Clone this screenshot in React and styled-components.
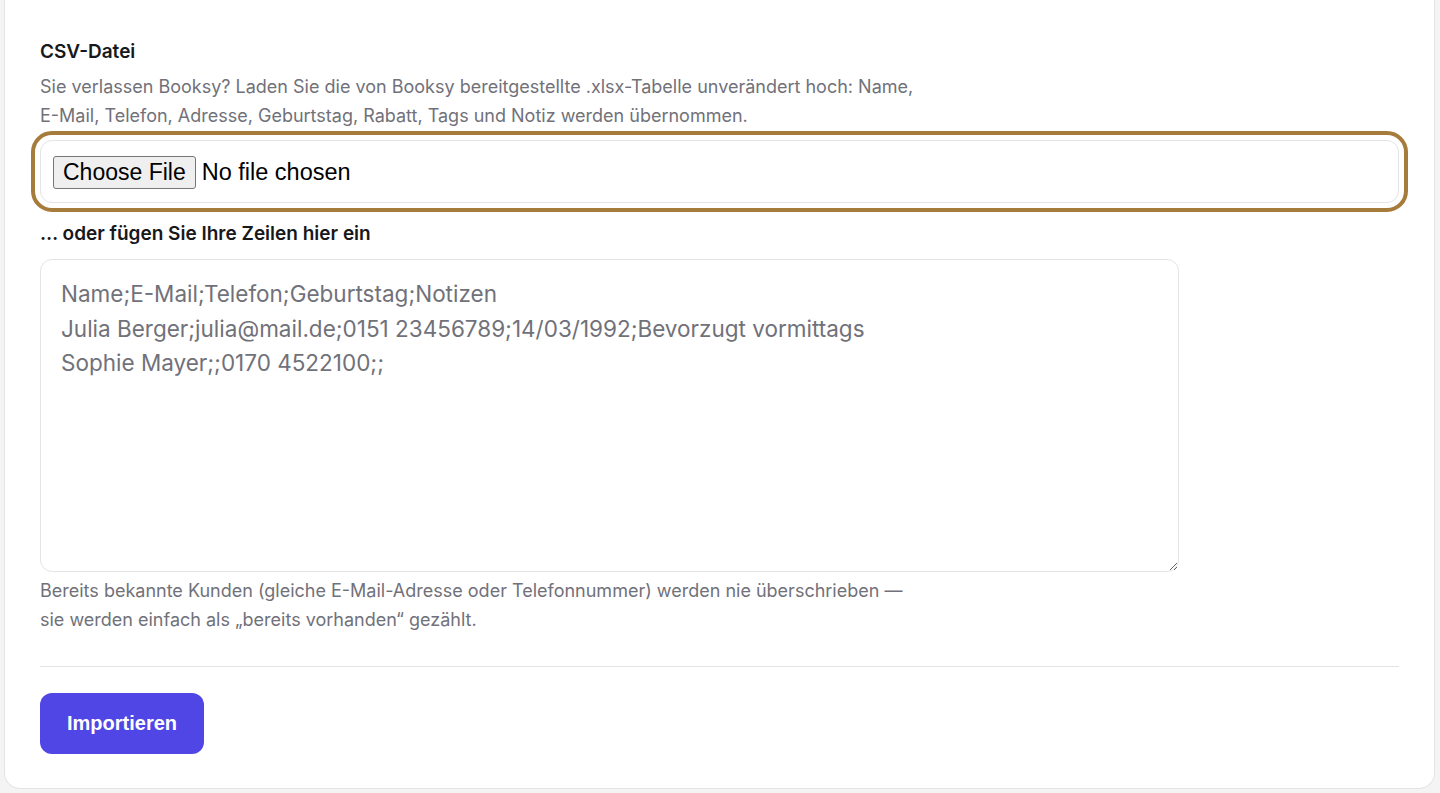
import React from 'react'
import styled, { createGlobalStyle } from 'styled-components'

const GlobalStyle = createGlobalStyle`
    html, body {
        margin: 0;
        background: #f4f4f5;
    }
    body {
        font-family: Inter, "Noto Sans", sans-serif;
        color: #18181b;
    }
`

const Page = styled.div`
    padding: 0 5px 5px 4px;
`

const Card = styled.section`
    background: #ffffff;
    border: 1px solid #e4e4e7;
    border-top: none;
    border-radius: 0 0 16px 16px;
    padding: 40px 35px 34px;
`

const Label = styled.h3`
    margin: 0;
    font-size: 19px;
    line-height: 24px;
    font-weight: 600;
    color: #18181b;
`

const Help = styled.p`
    margin: ${p => p.$top || 0}px 0 0;
    font-size: 18px;
    line-height: 28.5px;
    color: #71717a;
`

const FileInput = styled.input`
    display: block;
    box-sizing: border-box;
    width: 100%;
    height: 63px;
    margin-top: 10px;
    padding: 15px 12px 0;
    border: 1px solid #e4e4e7;
    border-radius: 12px;
    font-family: "Liberation Sans", Arial, sans-serif;
    font-size: 23.5px;
    color: #000;
    background: #fff;
    outline: 4px solid #a67c3c;
    outline-offset: 5px;

    &::file-selector-button {
        font: inherit;
        font-size: 23px;
        margin-right: 6px;
        padding: 2px 9px;
        border: 1px solid #767676;
        border-radius: 3px;
        background: #efefef;
        color: #000;
    }
`

const PasteLabel = styled(Label)`
    margin-top: 19px;
`

const Textarea = styled.textarea`
    display: block;
    box-sizing: border-box;
    width: 100%;
    max-width: 1139px;
    height: 313px;
    margin-top: 13px;
    padding: 17px 20px;
    border: 1px solid #e4e4e7;
    border-radius: 12px;
    font-family: Inter, "Noto Sans", sans-serif;
    font-size: 22.5px;
    line-height: 34.5px;
    color: #18181b;
    background: #fff;
    resize: vertical;
    outline: none;

    &::placeholder {
        color: #71717a;
    }
`

const Divider = styled.hr`
    margin: 32px 0 26px;
    border: none;
    border-top: 1px solid #e4e4e7;
`

const PrimaryButton = styled.button`
    height: 61px;
    padding: 0 27px;
    border: none;
    border-radius: 12px;
    background: #4f46e5;
    color: #fff;
    font-family: "Liberation Sans", Arial, sans-serif;
    font-size: 20px;
    font-weight: 700;
    cursor: pointer;
`

const placeholder = [
    'Name;E-Mail;Telefon;Geburtstag;Notizen',
    'Julia Berger;julia@mail.de;0151 23456789;14/03/1992;Bevorzugt vormittags',
    'Sophie Mayer;;0170 4522100;;',
].join('\n')

const App = () => {
    return (
        <Page>
            <GlobalStyle />
            <Card>
                <Label>CSV-Datei</Label>
                <Help $top={9}>
                    Sie verlassen Booksy? Laden Sie die von Booksy bereitgestellte .xlsx-Tabelle unverändert hoch: Name,
                    <br />
                    E-Mail, Telefon, Adresse, Geburtstag, Rabatt, Tags und Notiz werden übernommen.
                </Help>
                <FileInput type="file" accept=".csv,.xlsx" />
                <PasteLabel>… oder fügen Sie Ihre Zeilen hier ein</PasteLabel>
                <Textarea placeholder={placeholder} />
                <Help $top={5}>
                    Bereits bekannte Kunden (gleiche E-Mail-Adresse oder Telefonnummer) werden nie überschrieben —
                    <br />
                    sie werden einfach als „bereits vorhanden“ gezählt.
                </Help>
                <Divider />
                <PrimaryButton>Importieren</PrimaryButton>
            </Card>
        </Page>
    )
}

export default App
